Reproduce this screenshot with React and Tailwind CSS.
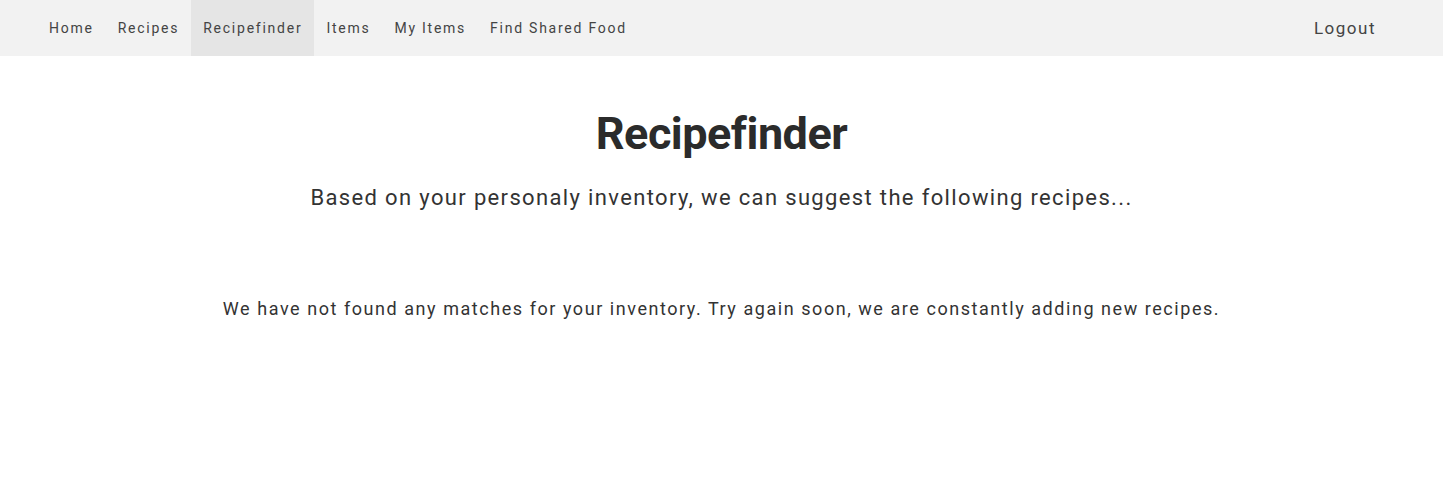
export default function App() {
  const items = ["Home", "Recipes", "Recipefinder", "Items", "My Items", "Find Shared Food"];
  return (
    <div className="min-h-[477px] bg-white text-[#333]" style={{ fontFamily: "Roboto, 'Noto Sans', sans-serif" }}>
      <nav className="flex h-14 items-stretch justify-between bg-[#f2f2f2] pl-[37px] pr-[55px]">
        <ul className="flex items-stretch">
          {items.map((it) => (
            <li
              key={it}
              className={`flex items-center px-3 pt-px text-[14px] tracking-[1.75px] text-[#444] ${it === "Recipefinder" ? "bg-[#e5e5e5]" : ""}`}
            >
              {it}
            </li>
          ))}
        </ul>
        <div className="flex items-center px-3 pt-px text-[17px] tracking-[1.5px] text-[#444]">Logout</div>
      </nav>
      <main className="flex flex-col items-center">
        <h1 className="mt-[48px] text-[45px] font-bold leading-[60px] tracking-[-0.5px] text-[#2b2b2b]">Recipefinder</h1>
        <p className="mt-[17px] text-[22px] tracking-[1.35px] text-[#333]">
          Based on your personaly inventory, we can suggest the following recipes...
        </p>
        <p className="mt-[81px] text-[18px] tracking-[1.55px] text-[#333]">
          We have not found any matches for your inventory. Try again soon, we are constantly adding new recipes.
        </p>
      </main>
    </div>
  );
}
